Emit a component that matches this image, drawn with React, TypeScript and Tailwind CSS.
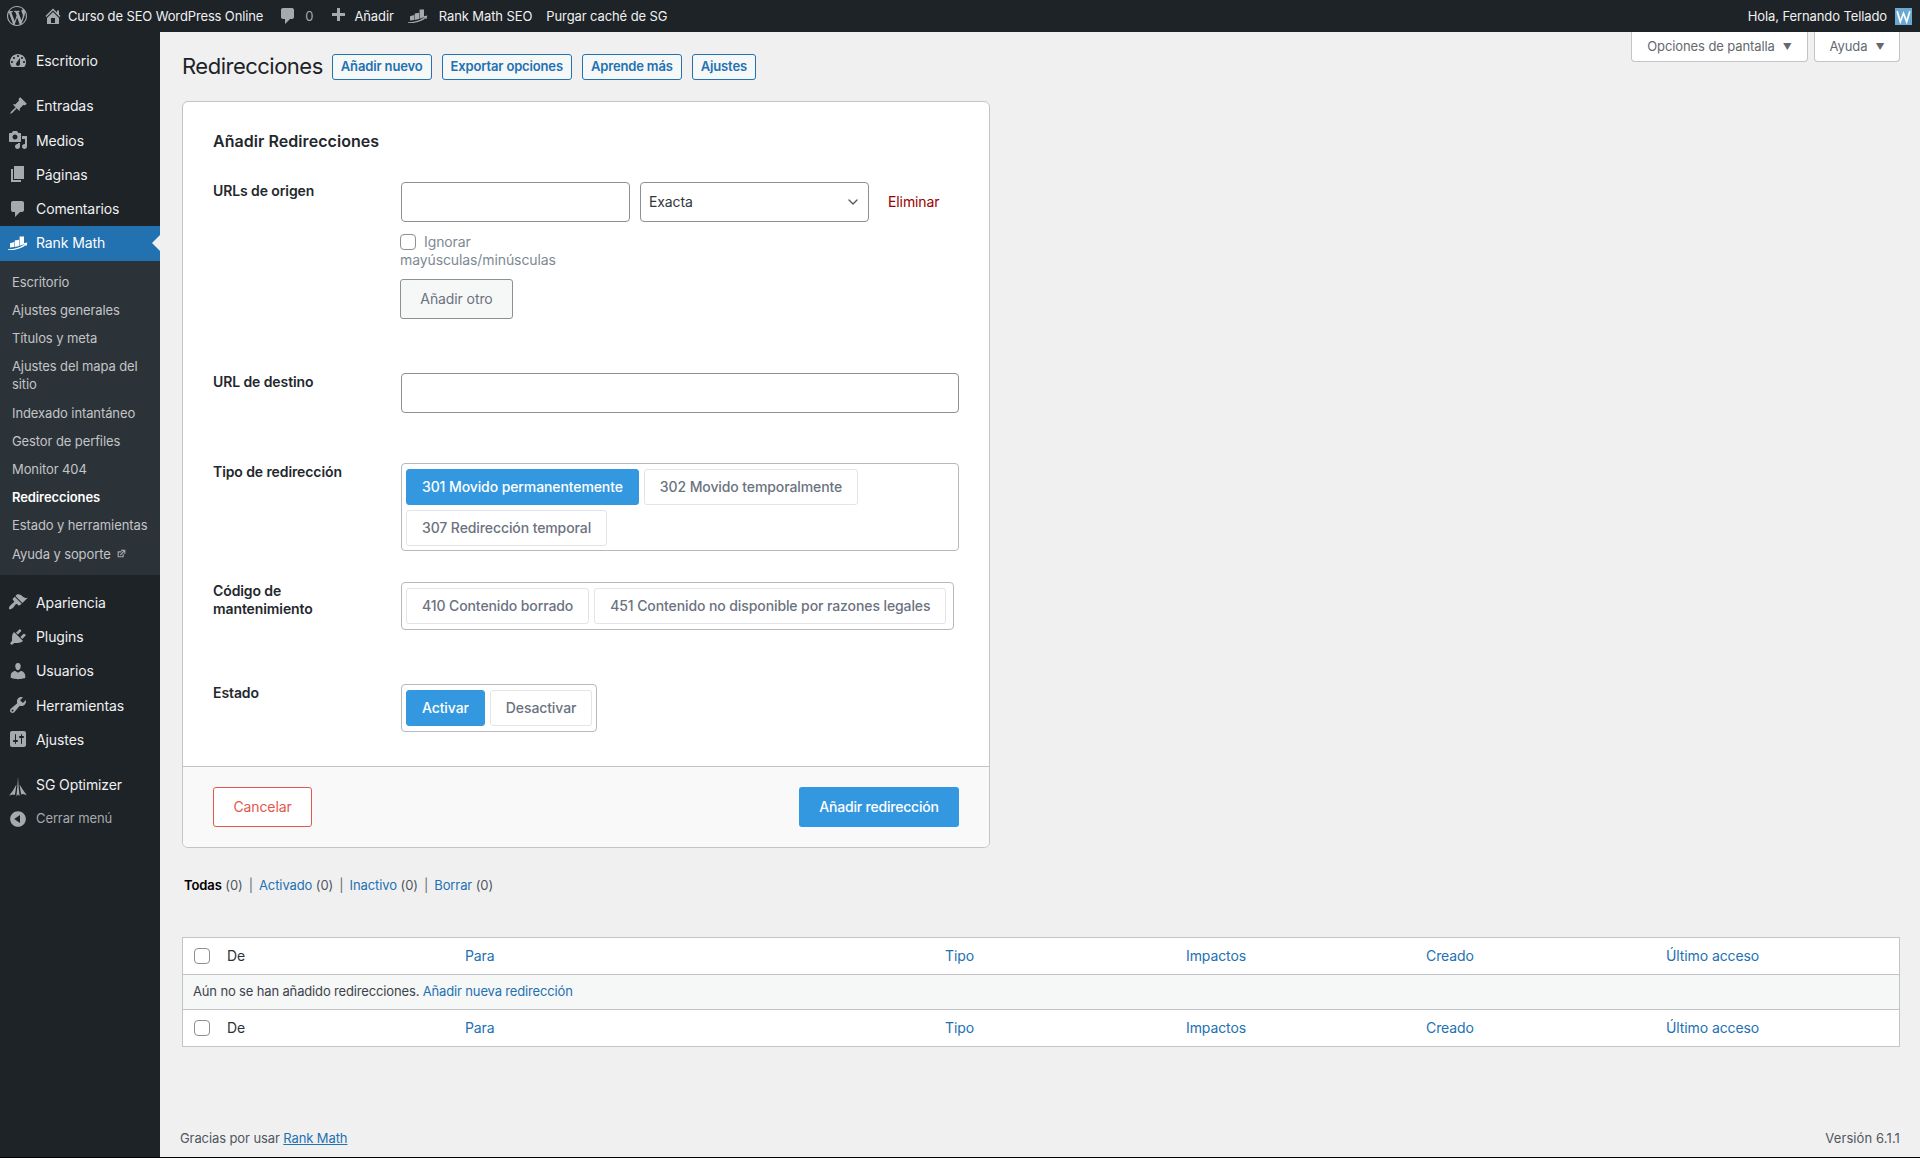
import { ChevronDown } from "lucide-react";

const paths: Record<string, string> = {
  wp: "M20 10c0-5.51-4.49-10-10-10C4.48 0 0 4.49 0 10c0 5.52 4.48 10 10 10 5.51 0 10-4.48 10-10zM7.78 15.37L4.37 6.22c.55-.02 1.17-.08 1.17-.08.5-.06.44-1.13-.06-1.11 0 0-1.45.11-2.37.11-.18 0-.37 0-.58-.01C4.12 2.69 6.87 1.11 10 1.11c2.33 0 4.45.87 6.05 2.34-.68-.11-1.65.39-1.65 1.58 0 .74.45 1.36.9 2.1.35.61.55 1.36.55 2.46 0 1.49-1.4 5-1.4 5l-3.03-8.37c.54-.02.82-.17.82-.17.5-.05.44-1.25-.06-1.22 0 0-1.44.12-2.38.12-.87 0-2.33-.12-2.33-.12-.5-.03-.56 1.2-.06 1.22l.92.08 1.26 3.41zM17.41 10c.24-.64.74-1.87.43-4.25.7 1.29 1.05 2.71 1.05 4.25 0 3.29-1.73 6.24-4.4 7.78.97-2.59 1.94-5.2 2.92-7.78zM6.1 18.09C3.12 16.65 1.11 13.53 1.11 10c0-1.3.23-2.48.72-3.59C3.25 10.3 4.67 14.2 6.1 18.09zm4.03-6.63l2.58 6.98c-.86.29-1.76.45-2.71.45-.79 0-1.57-.11-2.29-.33.81-2.38 1.62-4.74 2.42-7.1z",
  home: "M16 8.5l1.53 1.53-1.06 1.06L10 4.62l-6.47 6.47-1.06-1.06L10 2.5l4 4v-2h2v4zm-6-2.46l6 5.99V18H4v-5.97zM12 17v-5H8v5h4z",
  comment: "M5 2h9c1.1 0 2 .9 2 2v7c0 1.1-.9 2-2 2h-2l-5 5v-5H5c-1.1 0-2-.9-2-2V4c0-1.1.9-2 2-2z",
  plus: "M17 7v3h-5v5H9v-5H4V7h5V2h3v5h5z",
  dashboard: "M3.76 16h12.48c1.1-1.37 1.76-3.11 1.76-5 0-4.42-3.58-8-8-8s-8 3.58-8 8c0 1.89.66 3.63 1.76 5zM10 4c.55 0 1 .45 1 1s-.45 1-1 1-1-.45-1-1 .45-1 1-1zM6 6c.55 0 1 .45 1 1s-.45 1-1 1-1-.45-1-1 .45-1 1-1zm8 0c.55 0 1 .45 1 1s-.45 1-1 1-1-.45-1-1 .45-1 1-1zm-5.37 5.55L12 7v6c0 1.1-.9 2-2 2s-2-.9-2-2c0-.57.24-1.08.63-1.45zM4 10c.55 0 1 .45 1 1s-.45 1-1 1-1-.45-1-1 .45-1 1-1zm12 0c.55 0 1 .45 1 1s-.45 1-1 1-1-.45-1-1 .45-1 1-1z",
  post: "M10.44 3.02l1.82-1.82 6.5 6.5-1.82 1.82c-.56-.56-1.2-.61-1.95-.15l-3.45 3.45c.44.83.37 1.55-.2 2.12l-2.61-2.61-4.6 4.6-2.12 1.05 1.05-2.12 4.6-4.6-2.61-2.61c.57-.57 1.29-.64 2.12-.2l3.45-3.45c.46-.75.41-1.39-.15-1.95z",
  media: "M13 11V4c0-.55-.45-1-1-1h-1.67L9 1H5L3.67 3H2c-.55 0-1 .45-1 1v7c0 .55.45 1 1 1h10c.55 0 1-.45 1-1zM7 4.5c1.38 0 2.5 1.12 2.5 2.5S8.38 9.5 7 9.5 4.5 8.38 4.5 7 5.62 4.5 7 4.5zM14 6h5v10.5c0 1.38-1.12 2.5-2.5 2.5S14 17.88 14 16.5s1.12-2.5 2.5-2.5c.17 0 .34.02.5.05V9h-3V6zm-4 8.05V13h2v3.5c0 1.38-1.12 2.5-2.5 2.5S7 17.88 7 16.5 8.12 14 9.5 14c.17 0 .34.02.5.05z",
  page: "M6 15V2h10v13H6zm-1 1h8v2H3V5h2v11z",
  appearance: "M14.48 11.06L7.41 3.99l1.5-1.5c.5-.56 2.3-.47 3.51.32 1.21.8 1.43 1.28 2.91 2.1 1.18.64 2.45 1.26 4.45.85zm-.71.71L6.7 4.7 4.93 6.47c-.39.39-.39 1.02 0 1.41l1.06 1.06c.39.39.39 1.03 0 1.42-.6.6-1.43 1.11-2.21 1.69-.35.26-.7.53-1.01.84-1.34 1.34-2.4 3.3-1.6 4.1.8.8 2.76-.26 4.1-1.6.31-.31.58-.66.84-1.01.58-.78 1.09-1.61 1.69-2.21.39-.39 1.03-.39 1.42 0l1.06 1.06c.39.39 1.02.39 1.41 0z",
  plugins: "M13.11 4.36L9.87 7.6 8 5.73l3.24-3.24c.35-.34 1.05-.2 1.56.32.52.51.66 1.21.31 1.55zm-8 1.77l.91-1.12 9.01 9.01-1.19.84c-.71.71-2.63 1.16-3.82 1.16H6.14L4.9 17.26c-.59.59-1.54.59-2.12 0-.59-.58-.59-1.53 0-2.12l1.24-1.24v-3.88c0-1.13.4-3.19 1.09-3.89zm7.26 3.97l3.24-3.24c.34-.35 1.04-.21 1.55.31.52.51.66 1.21.31 1.55l-3.24 3.25z",
  users: "M10 9.25c-2.27 0-2.73-3.44-2.73-3.44C7 4.02 7.82 2 9.97 2c2.16 0 2.98 2.02 2.71 3.81 0 0-.41 3.44-2.68 3.44zm0 2.57L12.72 10c2.39 0 4.52 2.33 4.52 4.53v2.49s-3.65 1.13-7.24 1.13c-3.65 0-7.24-1.13-7.24-1.13v-2.49c0-2.25 1.94-4.48 4.47-4.48z",
  tools: "M16.68 9.77c-1.34 1.34-3.3 1.67-4.95.99l-5.41 6.52c-.99.99-2.59.99-3.58 0s-.99-2.59 0-3.57l6.52-5.42c-.68-1.65-.35-3.61.99-4.95 1.28-1.28 3.12-1.62 4.72-1.06l-2.89 2.89 2.82 2.82 2.86-2.87c.53 1.58.18 3.39-1.08 4.65zM3.81 16.21c.4.39 1.04.39 1.43 0 .4-.4.4-1.04 0-1.43-.39-.4-1.03-.4-1.43 0-.39.39-.39 1.03 0 1.43z",
  settings: "M18 16V4c0-1.1-.9-2-2-2H4c-1.1 0-2 .9-2 2v12c0 1.1.9 2 2 2h12c1.1 0 2-.9 2-2zM8 11h1c.55 0 1 .45 1 1s-.45 1-1 1H8v1.5c0 .28-.22.5-.5.5s-.5-.22-.5-.5V13H6c-.55 0-1-.45-1-1s.45-1 1-1h1V5.5c0-.28.22-.5.5-.5s.5.22.5.5V11zm5-2h-1c-.55 0-1-.45-1-1s.45-1 1-1h1V5.5c0-.28.22-.5.5-.5s.5.22.5.5V7h1c.55 0 1 .45 1 1s-.45 1-1 1h-1v5.5c0 .28-.22.5-.5.5s-.5-.22-.5-.5V9z",
  collapse: "M10 2.16c4.33 0 7.84 3.51 7.84 7.84s-3.51 7.84-7.84 7.84S2.16 14.33 2.16 10 5.71 2.16 10 2.16zm2 11.72V6.12L6.18 9.97z",
  rankmath: "M2 10.3l4.2-1.4V14L2 14.6zM6.7 7.6l4.4-.9v6.2l-4.4 1zM11.6 3.6H16v7.6l-4.4 1.6zM0 16.3c6-.2 12-1.5 16.5-5l-1-1.1 3.9-.8-1 3.8-1-1C13 16 6 17.3 0 17.1z",
  sg: "M10 1.6l.7 11 .9 8.6-1.6-1.7-1.6 1.7.9-8.6zM8.4 9.5l-.8 6.2L6.8 20l-2-.6-3.6 1.2 3.8-5.1zM11.6 9.5l3.4 5.6 3.8 5.1-3.6-1.2-2 .6-.8-4.3z",
};

function Dash({ name, className }: { name: string; className?: string }) {
  return (
    <svg viewBox="0 0 20 20" className={className} fill="currentColor">
      <path d={paths[name]} />
    </svg>
  );
}

const topMenu = [
  { icon: "post", label: "Entradas" },
  { icon: "media", label: "Medios" },
  { icon: "page", label: "Páginas" },
  { icon: "comment", label: "Comentarios" },
];

const bottomMenu = [
  { icon: "appearance", label: "Apariencia" },
  { icon: "plugins", label: "Plugins" },
  { icon: "users", label: "Usuarios" },
  { icon: "tools", label: "Herramientas" },
  { icon: "settings", label: "Ajustes" },
];

const subMenu = [
  "Escritorio",
  "Ajustes generales",
  "Títulos y meta",
  "Ajustes del mapa del sitio",
  "Indexado intantáneo",
  "Gestor de perfiles",
  "Monitor 404",
  "Redirecciones",
  "Estado y herramientas",
];

const headerLinks = ["Añadir nuevo", "Exportar opciones", "Aprende más", "Ajustes"];
const columns = ["Para", "Tipo", "Impactos", "Creado", "Último acceso"];

function MenuRow({ icon, label }: { icon: string; label: string }) {
  return (
    <a className="flex h-[34.25px] items-center gap-2 pb-px pl-2 text-[14px] text-[#f0f0f1]">
      <Dash name={icon} className="h-5 w-5 shrink-0 overflow-visible text-[#a7aaad]" />
      {label}
    </a>
  );
}

function Sidebar() {
  return (
    <aside className="flex w-[160px] shrink-0 flex-col bg-[#1d2327] pt-3">
      <MenuRow icon="dashboard" label="Escritorio" />
      <div className="h-[11px]" />
      {topMenu.map((item) => (
        <MenuRow key={item.label} {...item} />
      ))}
      <a className="relative flex h-[34.25px] items-center gap-2 bg-[#2271b1] pb-px pl-2 text-[14px] text-white">
        <Dash name="rankmath" className="h-5 w-5 shrink-0 text-white" />
        Rank Math
        <span className="absolute right-0 top-[9px] h-0 w-0 border-y-[8px] border-r-[8px] border-y-transparent border-r-[#f0f0f1]" />
      </a>
      <ul className="bg-[#2c3338] py-[7px] text-[13px] leading-[18.2px] text-[#c3c4c7]">
        {subMenu.map((label) => (
          <li key={label} className={label === "Redirecciones" ? "py-[5px] pl-3 pr-2 font-semibold text-white" : "py-[5px] pl-3 pr-2"}>
            {label}
          </li>
        ))}
        <li className="flex items-center gap-[5px] py-[5px] pl-3">
          Ayuda y soporte
          <svg viewBox="0 0 20 20" className="h-[11px] w-[11px] text-[#a7aaad]" fill="currentColor">
            <path d="M9 3h8v8l-2-1V6.92l-6.6 6.6-1.42-1.42L13.58 5.5H10zm3 12v-3l2-2v7H3V6h8L9 8H5v7h7z" />
          </svg>
        </li>
      </ul>
      <div className="h-[11px]" />
      {bottomMenu.map((item) => (
        <MenuRow key={item.label} {...item} />
      ))}
      <div className="h-[11px]" />
      <MenuRow icon="sg" label="SG Optimizer" />
      <a className="flex h-[34px] items-center gap-2 pl-2 text-[13px] text-[#a7aaad]">
        <Dash name="collapse" className="h-5 w-5 shrink-0" />
        Cerrar menú
      </a>
    </aside>
  );
}

function AdminBar() {
  return (
    <header className="flex h-8 shrink-0 items-center bg-[#1d2327] pl-[7px] pr-2 text-[13px] text-[#f0f0f1]">
      <Dash name="wp" className="h-5 w-5 text-[#a7aaad]" />
      <Dash name="home" className="ml-[16px] h-5 w-5 text-[#a7aaad]" />
      <span className="ml-[5px] mt-px tracking-[-0.13px]">Curso de SEO WordPress Online</span>
      <Dash name="comment" className="ml-[15px] h-5 w-5 text-[#a7aaad]" />
      <span className="ml-[7px] mt-px text-[#a7aaad]">0</span>
      <Dash name="plus" className="ml-[15px] h-5 w-5 text-[#a7aaad]" />
      <span className="ml-[6px] mt-px">Añadir</span>
      <Dash name="rankmath" className="ml-[14px] h-5 w-5 text-[#a7aaad]" />
      <span className="ml-[11px] mt-px">Rank Math SEO</span>
      <span className="ml-[14px] mt-px">Purgar caché de SG</span>
      <span className="ml-auto mt-px">Hola, Fernando Tellado</span>
      <svg viewBox="0 0 16 16" className="ml-2 h-[17px] w-[17px] bg-[#6aa9d2]">
        <path d="M2 3l3 10 3-8 3 8 3-10" fill="none" stroke="#fff" strokeWidth="1.6" />
      </svg>
    </header>
  );
}

function Choice({ label, active }: { label: string; active?: boolean }) {
  return (
    <button
      className={
        active
          ? "h-9 rounded-[3px] border border-[#3498e0] bg-[#3498e0] px-[15px] pb-px text-[14px] font-medium text-white"
          : "h-9 rounded-[3px] border border-[#e2e4e7] bg-white px-[15px] pb-px text-[14px] font-medium text-[#6b7280]"
      }
    >
      {label}
    </button>
  );
}

function FormRow({ label, className, children }: { label: React.ReactNode; className: string; children: React.ReactNode }) {
  return (
    <div className={`flex items-start ${className}`}>
      <label className="w-[188px] shrink-0 text-[14px] font-semibold leading-[18px] text-[#23282d]">{label}</label>
      {children}
    </div>
  );
}

const fieldClass = "h-10 rounded-[4px] border border-[#8c8f94] bg-white";
const groupClass = "flex flex-wrap gap-[5px] rounded-[4px] border border-[#b4b9be] bg-white px-1 pt-[5px]";

function RedirectForm() {
  return (
    <section className="mt-[21px] w-[808px] overflow-hidden rounded-[6px] border border-[#c3c4c7] bg-white">
      <div className="px-[30px] pb-[34px] pt-[27px]">
        <h2 className="text-[16px] font-semibold leading-6 tracking-[0.05px] text-[#23282d]">Añadir Redirecciones</h2>
        <FormRow label="URLs de origen" className="mt-[29px]">
          <div>
            <div className="flex items-center">
              <input className={`${fieldClass} w-[229px]`} />
              <div className="relative ml-[10px]">
                <select className={`${fieldClass} w-[229px] appearance-none pb-px pl-[8px] text-[14px] text-[#32373c]`}>
                  <option>Exacta</option>
                </select>
                <ChevronDown className="pointer-events-none absolute right-[8px] top-[12px] h-4 w-4 text-[#50575e]" strokeWidth={2} />
              </div>
              <a className="ml-[19px] -mt-[2px] text-[14px] text-[#990000]">Eliminar</a>
            </div>
            <div className="-ml-px mt-[11px] text-[14px] leading-[18px] text-[#7e8993]">
              <label className="flex items-center gap-[8px]">
                <input type="checkbox" className="h-4 w-4 appearance-none rounded-[4px] border border-[#8c8f94] bg-white" />
                Ignorar
              </label>
              mayúsculas/minúsculas
            </div>
            <button className="-ml-px mt-[10px] block h-10 w-[113px] rounded-[3px] border border-[#8c8f94] bg-[#f6f7f7] pb-px text-[14px] text-[#6b7280]">
              Añadir otro
            </button>
          </div>
        </FormRow>
        <FormRow label="URL de destino" className="mt-[54px]">
          <input className={`${fieldClass} w-[559px]`} />
        </FormRow>
        <FormRow label="Tipo de redirección" className="mt-[50px]">
          <div className={`${groupClass} w-[558px] pb-1`}>
            <Choice label="301 Movido permanentemente" active />
            <Choice label="302 Movido temporalmente" />
            <Choice label="307 Redirección temporal" />
          </div>
        </FormRow>
        <FormRow
          label={
            <>
              Código de
              <br />
              mantenimiento
            </>
          }
          className="mt-[31px]"
        >
          <div className={`${groupClass} w-[553px] pb-[5px]`}>
            <Choice label="410 Contenido borrado" />
            <Choice label="451 Contenido no disponible por razones legales" />
          </div>
        </FormRow>
        <FormRow label="Estado" className="mt-[54px]">
          <div className={`${groupClass} pb-[5px]`}>
            <Choice label="Activar" active />
            <Choice label="Desactivar" />
          </div>
        </FormRow>
      </div>
      <div className="flex justify-between border-t border-[#c3c4c7] bg-[#f9f9f9] px-[30px] py-5">
        <button className="h-10 w-[99px] rounded-[3px] border border-[#e2574c] bg-white pb-[2px] text-[14px] text-[#e2574c]">
          Cancelar
        </button>
        <button className="h-10 w-[160px] rounded-[3px] bg-[#3498e0] pb-[2px] text-[14px] font-medium tracking-[-0.2px] text-white">
          Añadir redirección
        </button>
      </div>
    </section>
  );
}

function TableRow() {
  return (
    <div className="grid h-[36px] grid-cols-[36px_238px_480px_241px_240px_240px_1fr] items-center pb-px text-[14px]">
      <input type="checkbox" className="ml-[11px] mt-px h-4 w-4 appearance-none rounded-[4px] border border-[#8c8f94] bg-white" />
      <span className="pl-2 text-[#2c3338]">De</span>
      {columns.map((col) => (
        <a key={col} className="pl-2 text-[#2271b1]">
          {col}
        </a>
      ))}
    </div>
  );
}

export default function App() {
  return (
    <div className="flex h-[1158px] flex-col overflow-hidden border-b border-black bg-[#f0f0f1] font-['Inter',sans-serif] tracking-[-0.1px] text-[#3c434a]">
      <AdminBar />
      <div className="flex min-h-0 flex-1">
        <Sidebar />
        <main className="flex min-w-0 flex-1 flex-col pl-[22px] pr-[20px]">
          <div className="flex justify-end gap-[6px] text-[13px] text-[#646970]">
            <button className="flex h-[30px] w-[177px] items-center justify-center gap-2 rounded-b-[4px] border border-t-0 border-[#c3c4c7] bg-white">
              Opciones de pantalla <span className="text-[9px]">▼</span>
            </button>
            <button className="flex h-[30px] w-[86px] items-center justify-center gap-2 rounded-b-[4px] border border-t-0 border-[#c3c4c7] bg-white">
              Ayuda <span className="text-[9px]">▼</span>
            </button>
          </div>
          <div className="-mt-[9px] flex h-[27px] items-center">
            <h1 className="mr-[9px] text-[22px] leading-[27px] tracking-[-0.5px] text-[#1d2327]">Redirecciones</h1>
            <div className="flex gap-[10px]">
              {headerLinks.map((link) => (
                <a key={link} className="flex h-[26px] items-center rounded-[3px] border border-[#2271b1] bg-[#f6f7f7] px-2 text-[13px] font-semibold tracking-[-0.15px] text-[#2271b1]">
                  {link}
                </a>
              ))}
            </div>
          </div>
          <RedirectForm />
          <div className="ml-[2px] mt-[28px] text-[13px] leading-[18px] text-[#50575e]">
            <b className="font-semibold text-black">Todas</b> (0) <span className="mx-[2.5px] text-[#646970]">|</span>{" "}
            <a className="text-[#2271b1]">Activado</a> (0) <span className="mx-[2.5px] text-[#646970]">|</span>{" "}
            <a className="text-[#2271b1]">Inactivo</a> (0) <span className="mx-[2.5px] text-[#646970]">|</span>{" "}
            <a className="text-[#2271b1]">Borrar</a> (0)
          </div>
          <div className="mt-[43px] border border-[#c3c4c7] bg-white">
            <TableRow />
            <div className="flex h-[36px] items-center border-y border-[#c3c4c7] bg-[#f6f7f7] pl-[10px] text-[13px] tracking-[-0.15px] text-[#3c434a]">
              Aún no se han añadido redirecciones.&nbsp;<a className="text-[#2271b1]">Añadir nueva redirección</a>
            </div>
            <TableRow />
          </div>
          <footer className="-ml-[2px] mt-auto flex justify-between pb-[10px] text-[13px] leading-[18px] text-[#50575e]">
            <span>
              Gracias por usar <a className="text-[#2271b1] underline">Rank Math</a>
            </span>
            <span className="tracking-[0.1px]">Versión 6.1.1</span>
          </footer>
        </main>
      </div>
    </div>
  );
}
